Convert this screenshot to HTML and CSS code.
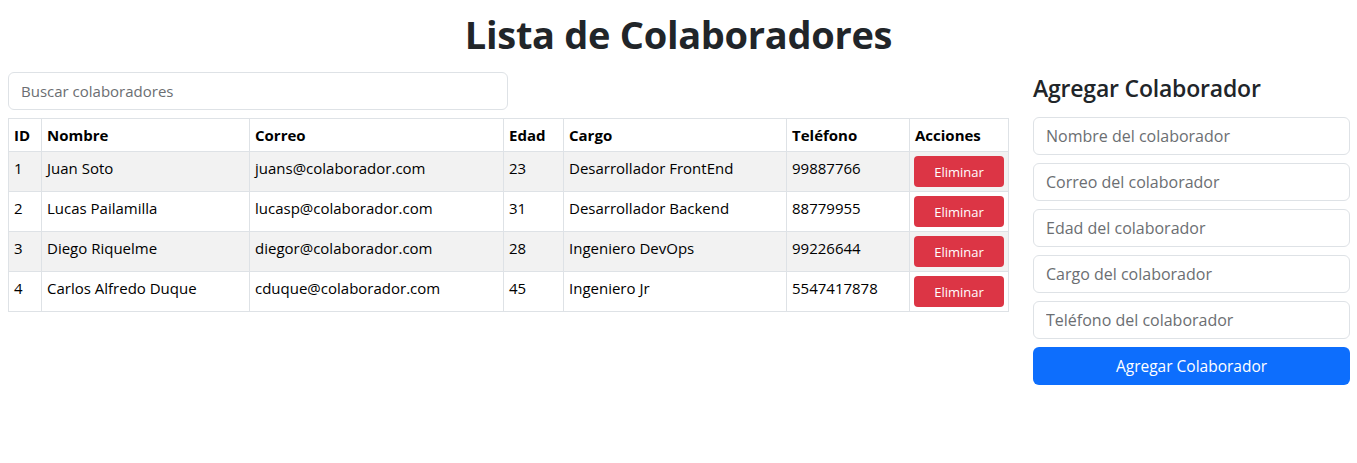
FILE: index.html
```html
<!DOCTYPE html>
<html lang="es">
<head>
<meta charset="utf-8">
<title>Lista de Colaboradores</title>
<link rel="stylesheet" href="styles.css">
</head>
<body>
<h1 class="title">Lista de Colaboradores</h1>
<div class="layout">
  <section class="list-col">
    <input class="field search" type="text" placeholder="Buscar colaboradores">
    <table class="grid">
      <thead>
        <tr><th class="c-id">ID</th><th class="c-name">Nombre</th><th class="c-mail">Correo</th><th class="c-age">Edad</th><th class="c-role">Cargo</th><th class="c-phone">Teléfono</th><th class="c-act">Acciones</th></tr>
      </thead>
      <tbody>
        <tr class="odd"><td>1</td><td>Juan Soto</td><td>juans@colaborador.com</td><td>23</td><td>Desarrollador FrontEnd</td><td>99887766</td><td class="act"><button class="btn-del">Eliminar</button></td></tr>
        <tr><td>2</td><td>Lucas Pailamilla</td><td>lucasp@colaborador.com</td><td>31</td><td>Desarrollador Backend</td><td>88779955</td><td class="act"><button class="btn-del">Eliminar</button></td></tr>
        <tr class="odd"><td>3</td><td>Diego Riquelme</td><td>diegor@colaborador.com</td><td>28</td><td>Ingeniero DevOps</td><td>99226644</td><td class="act"><button class="btn-del">Eliminar</button></td></tr>
        <tr><td>4</td><td>Carlos Alfredo Duque</td><td>cduque@colaborador.com</td><td>45</td><td>Ingeniero Jr</td><td>5547417878</td><td class="act"><button class="btn-del">Eliminar</button></td></tr>
      </tbody>
    </table>
  </section>
  <aside class="form-col">
    <h3 class="form-title">Agregar Colaborador</h3>
    <form class="add-form">
      <input class="field" type="text" placeholder="Nombre del colaborador">
      <input class="field" type="text" placeholder="Correo del colaborador">
      <input class="field" type="text" placeholder="Edad del colaborador">
      <input class="field" type="text" placeholder="Cargo del colaborador">
      <input class="field" type="text" placeholder="Teléfono del colaborador">
      <button class="btn-add" type="button">Agregar Colaborador</button>
    </form>
  </aside>
</div>
</body>
</html>
```

FILE: styles.css
```css
* { box-sizing: border-box; }
body {
  margin: 0;
  font-family: "Open Sans", "Noto Sans", sans-serif;
  color: #212529;
  background: #fff;
}
.title {
  margin: 10px 0 0;
  height: 62px;
  text-align: center;
  font-size: 38px;
  font-weight: 700;
  line-height: 48px;
  letter-spacing: -0.3px;
}
.layout {
  display: flex;
  gap: 25px;
  padding: 0 7px 0 8px;
}
.list-col { width: 1000px; flex: none; }
.form-col { width: 317px; flex: none; padding-top: 3px; }
.field {
  display: block;
  width: 100%;
  height: 38px;
  padding: 0 12px;
  border: 1px solid #dee2e6;
  border-radius: 6px;
  font-family: inherit;
  font-size: 16px;
  color: #212529;
  background: #fff;
  outline: none;
}
.field::placeholder { color: #6b6e72; }
.search { width: 500px; font-size: 15px; }
.grid {
  margin-top: 8px;
  width: 1001px;
  table-layout: fixed;
  border-collapse: collapse;
  font-size: 15px;
  color: #000;
}
.grid th, .grid td {
  border: 1px solid #dee2e6;
  padding: 4px 5px;
  text-align: left;
  vertical-align: top;
  line-height: 24px;
}
.grid th { font-weight: 700; }
.grid td.act { padding-left: 4px; }
.grid tr.odd td { background: #f2f2f2; }
.c-id { width: 33px; }
.c-name { width: 208px; }
.c-mail { width: 254px; }
.c-age { width: 60px; }
.c-role { width: 223px; }
.c-phone { width: 123px; }
.c-act { width: 99px; }
.btn-del {
  display: block;
  width: 90px;
  height: 31px;
  margin: 0;
  border: 0;
  border-radius: 4px;
  background: #dc3545;
  color: #fff;
  font-family: inherit;
  font-size: 13px;
}
.form-title {
  margin: 0 0 16px;
  font-size: 23px;
  font-weight: 600;
  line-height: 26px;
  letter-spacing: -0.2px;
}
.add-form { display: flex; flex-direction: column; gap: 8px; }
.btn-add {
  height: 38px;
  border: 0;
  border-radius: 6px;
  background: #0d6efd;
  color: #fff;
  font-family: inherit;
  font-size: 15.5px;
}
```
